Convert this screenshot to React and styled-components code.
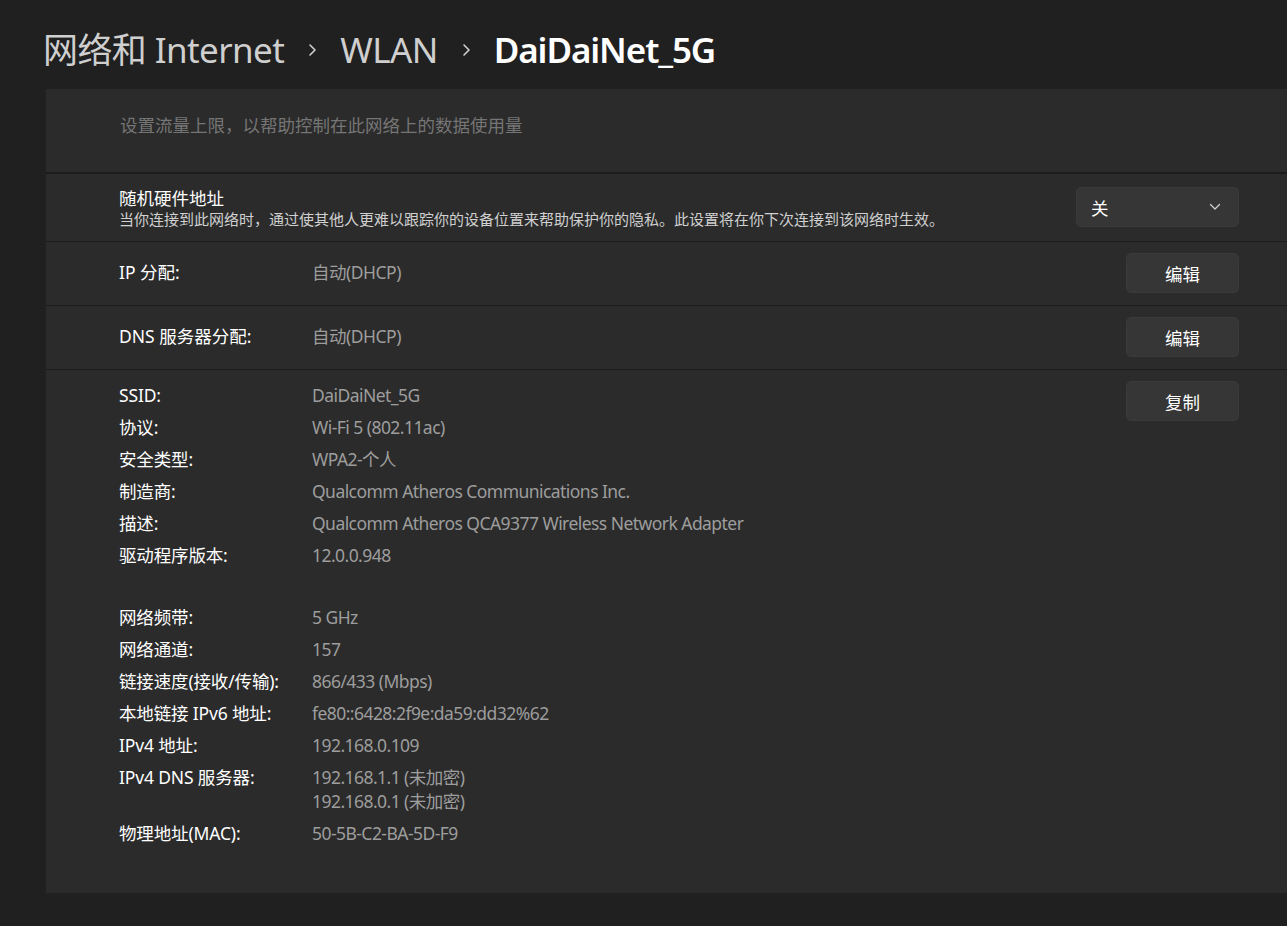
import React from "react";
import styled, { createGlobalStyle } from "styled-components";

const GlobalStyle = createGlobalStyle`
  html, body { margin: 0; padding: 0; background: #202020; }
  body {
    font-family: "Segoe UI", "Noto Sans", "Noto Sans CJK SC", sans-serif;
    color: #ffffff;
    -webkit-font-smoothing: antialiased;
  }
`;

const Page = styled.div`
  min-height: 926px;
  background: #202020;
  overflow: hidden;
`;

const Header = styled.header`
  display: flex;
  align-items: center;
  padding: 28px 0 0 43px;
  height: 44px;
  margin-bottom: 17px;
  font-size: 35px;
  line-height: 44px;
`;

const Crumb = styled.span`
  color: ${(p) => (p.$current ? "#ffffff" : "#cfcfcf")};
  font-weight: ${(p) => (p.$current ? 600 : 400)};
  letter-spacing: ${(p) => (p.$current ? "-1.1px" : "-0.6px")};
  white-space: nowrap;
`;

const Chevron = styled.span`
  display: flex;
  align-items: center;
  justify-content: center;
  width: 56px;
  color: #cfcfcf;
  svg { display: block; }
`;

const Panel = styled.section`
  margin-left: 46px;
  display: flex;
  flex-direction: column;
  background: #1c1c1c;
`;

const Card = styled.div`
  background: #2b2b2b;
  margin-top: ${(p) => p.$gap || 0}px;
  display: flex;
  align-items: center;
  box-sizing: border-box;
  height: ${(p) => (p.$h ? `${p.$h}px` : "auto")};
  padding: 0 48px 0 73px;
`;

const Hint = styled.div`
  align-self: flex-start;
  margin-top: 24px;
  font-size: 17.5px;
  line-height: 24px;
  color: #757575;
  padding-left: 1px;
`;

const TitleBlock = styled.div`
  flex: 1;
  display: flex;
  flex-direction: column;
`;

const RowTitle = styled.div`
  font-size: 17.5px;
  line-height: 22px;
  color: #ffffff;
`;

const Caption = styled.div`
  font-size: 15px;
  line-height: 20px;
  color: #d0d0d0;
`;

const Select = styled.div`
  width: 163px;
  height: 40px;
  margin-top: -1px;
  box-sizing: border-box;
  border-radius: 5px;
  background: #363636;
  border: 1px solid #3a3a3a;
  display: flex;
  align-items: center;
  justify-content: space-between;
  padding: 0 17px 0 14px;
  font-size: 17.5px;
  color: #ffffff;
`;

const Label = styled.div`
  width: 193px;
  flex-shrink: 0;
  font-size: 17.5px;
  color: #ffffff;
  margin-top: -4px;
`;

const Value = styled.div`
  flex: 1;
  font-size: 17.5px;
  letter-spacing: -0.5px;
  color: #9d9d9d;
  margin-top: -4px;
`;

const Button = styled.button`
  width: 113px;
  height: 40px;
  box-sizing: border-box;
  border-radius: 5px;
  background: #363636;
  border: 1px solid #3a3a3a;
  color: #ffffff;
  font-family: inherit;
  font-size: 17.5px;
  padding: 0;
  flex-shrink: 0;
  margin-top: ${(p) => p.$shift || 0}px;
`;

const Details = styled.div`
  background: #2b2b2b;
  margin-top: 1px;
  display: flex;
  align-items: flex-start;
  padding: 11px 48px 48px 73px;
`;

const List = styled.dl`
  flex: 1;
  margin: 2px 0 0;
  display: flex;
  flex-direction: column;
  gap: 8px;
`;

const Item = styled.div`
  display: flex;
  min-height: 24px;
  font-size: 17.5px;
  line-height: 24px;
`;

const Spacer = styled.div`
  height: 22px;
`;

const DTerm = styled.dt`
  width: 193px;
  flex-shrink: 0;
  color: #ffffff;
  letter-spacing: -0.15px;
`;

const DDesc = styled.dd`
  margin: 0;
  color: #9d9d9d;
  letter-spacing: -0.55px;
  display: flex;
  flex-direction: column;
`;

const ChevronRight = () => (
  <svg width="10" height="14" viewBox="0 0 10 14">
    <path d="M3 2 L8 7 L3 12" fill="none" stroke="currentColor" strokeWidth="1.6" strokeLinecap="round" strokeLinejoin="round" />
  </svg>
);

const ChevronDown = () => (
  <svg width="12" height="8" viewBox="0 0 12 8">
    <path d="M1.5 1.5 L6 6 L10.5 1.5" fill="none" stroke="#cfcfcf" strokeWidth="1.3" strokeLinecap="round" strokeLinejoin="round" />
  </svg>
);

const group1 = [
  ["SSID:", ["DaiDaiNet_5G"]],
  ["协议:", ["Wi-Fi 5 (802.11ac)"]],
  ["安全类型:", ["WPA2-个人"]],
  ["制造商:", ["Qualcomm Atheros Communications Inc."]],
  ["描述:", ["Qualcomm Atheros QCA9377 Wireless Network Adapter"]],
  ["驱动程序版本:", ["12.0.0.948"]],
];

const group2 = [
  ["网络频带:", ["5 GHz"]],
  ["网络通道:", ["157"]],
  ["链接速度(接收/传输):", ["866/433 (Mbps)"]],
  ["本地链接 IPv6 地址:", ["fe80::6428:2f9e:da59:dd32%62"]],
  ["IPv4 地址:", ["192.168.0.109"]],
  ["IPv4 DNS 服务器:", ["192.168.1.1 (未加密)", "192.168.0.1 (未加密)"]],
  ["物理地址(MAC):", ["50-5B-C2-BA-5D-F9"]],
];

const renderItems = (items) =>
  items.map(([k, vals]) => (
    <Item key={k}>
      <DTerm>{k}</DTerm>
      <DDesc>
        {vals.map((v) => (
          <span key={v}>{v}</span>
        ))}
      </DDesc>
    </Item>
  ));

export default function App() {
  return (
    <Page>
      <GlobalStyle />
      <Header>
        <Crumb>网络和 Internet</Crumb>
        <Chevron><ChevronRight /></Chevron>
        <Crumb>WLAN</Crumb>
        <Chevron><ChevronRight /></Chevron>
        <Crumb $current>DaiDaiNet_5G</Crumb>
      </Header>
      <Panel>
        <Card $h={83}>
          <Hint>设置流量上限，以帮助控制在此网络上的数据使用量</Hint>
        </Card>
        <Card $h={67} $gap={2}>
          <TitleBlock>
            <RowTitle>随机硬件地址</RowTitle>
            <Caption>当你连接到此网络时，通过使其他人更难以跟踪你的设备位置来帮助保护你的隐私。此设置将在你下次连接到该网络时生效。</Caption>
          </TitleBlock>
          <Select>
            <span>关</span>
            <ChevronDown />
          </Select>
        </Card>
        <Card $h={63} $gap={1}>
          <Label>IP 分配:</Label>
          <Value>自动(DHCP)</Value>
          <Button $shift={-1}>编辑</Button>
        </Card>
        <Card $h={63} $gap={1}>
          <Label>DNS 服务器分配:</Label>
          <Value>自动(DHCP)</Value>
          <Button $shift={-1}>编辑</Button>
        </Card>
        <Details>
          <List>
            {renderItems(group1)}
            <Spacer />
            {renderItems(group2)}
          </List>
          <Button>复制</Button>
        </Details>
      </Panel>
    </Page>
  );
}
